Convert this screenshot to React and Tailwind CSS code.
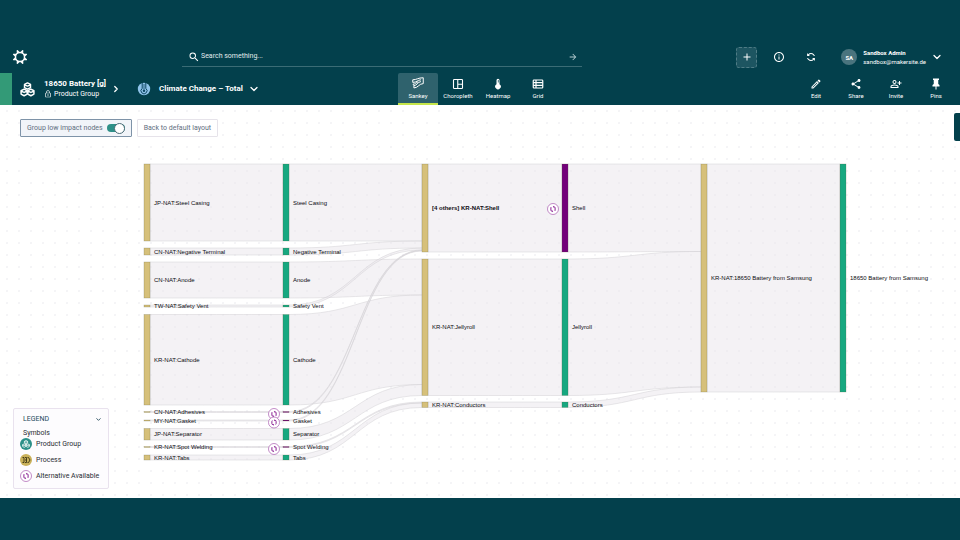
import { useState } from "react";
import {
  MdSearch,
  MdArrowForward,
  MdAdd,
  MdInfoOutline,
  MdLoop,
  MdOutlineEdit,
  MdShare,
  MdOutlinePersonAddAlt,
  MdLockOutline,
} from "react-icons/md";
import { ChevronDown, ChevronRight } from "lucide-react";

const COLUMN_X = [144, 283, 422, 562, 701, 840];
const NODE_WIDTH = 6;
const KIND_COLOR = { process: "#d6c07a", group: "#17a880", alt: "#73007a" };

const PARTS = [
  { from: "JP-NAT", name: "Steel Casing", y: [0, 77], to: [0, 77] },
  { from: "CN-NAT", name: "Negative Terminal", y: [84, 91], to: [77, 84] },
  { from: "CN-NAT", name: "Anode", y: [98, 134], to: [95, 131] },
  { from: "TW-NAT", name: "Safety Vent", y: [141, 143], to: [84, 86] },
  { from: "KR-NAT", name: "Cathode", y: [150.5, 241], to: [131, 220.5] },
  { from: "CN-NAT", name: "Adhesives", y: [247.5, 248.5], to: [86, 86.5], alt: true },
  { from: "MY-NAT", name: "Gasket", y: [256, 257], to: [86.5, 87], alt: true },
  { from: "JP-NAT", name: "Separator", y: [264.5, 276], to: [220.5, 231.5] },
  { from: "KR-NAT", name: "Spot Welding", y: [282.5, 283.5], to: [238, 239], alt: true },
  { from: "KR-NAT", name: "Tabs", y: [291, 296], to: [239, 243.5] },
];

const ASSEMBLIES = [
  { label: "[4 others] KR-NAT:Shell", name: "Shell", y: [0, 88], to: [0, 87.5], alt: true, bold: true },
  { label: "KR-NAT:Jellyroll", name: "Jellyroll", y: [95, 231.5], to: [87.5, 223] },
  { label: "KR-NAT:Conductors", name: "Conductors", y: [238, 243.5], to: [223, 228] },
];

const PRODUCT = [0, 228];

function Link({ column, from, to }) {
  const x0 = COLUMN_X[column] + NODE_WIDTH;
  const x1 = COLUMN_X[column + 1];
  const mid = (x0 + x1) / 2;
  const top = `M${x0} ${from[0]}C${mid} ${from[0]} ${mid} ${to[0]} ${x1} ${to[0]}`;
  const bottom = `C${mid} ${to[1]} ${mid} ${from[1]} ${x0} ${from[1]}`;
  return (
    <path
      d={`${top}V${to[1]}${bottom}Z`}
      fill="#eae6ec"
      fillOpacity="0.5"
      stroke="#d2d0d4"
      strokeWidth="0.5"
    />
  );
}

function Node({ column, y, kind, label, bold }) {
  const x = COLUMN_X[column];
  return (
    <g>
      <rect
        x={x}
        y={y[0]}
        width={NODE_WIDTH}
        height={y[1] - y[0]}
        fill={KIND_COLOR[kind]}
        stroke="#5b5b3c"
        strokeOpacity="0.45"
        strokeWidth="0.5"
      />
      <text
        x={x + 10}
        y={(y[0] + y[1]) / 2 + 2}
        fill="#0c0c12"
        className={bold ? "text-[6px] font-bold" : "text-[6px]"}
      >
        {label}
      </text>
    </g>
  );
}

function AltGlyph() {
  return (
    <g>
      <circle r="5.5" fill="#fff" stroke="#a95bb0" strokeWidth="0.7" />
      <g fill="none" stroke="#8a1f93" strokeWidth="1">
        <path d="M-0.6 2.2H-1A1.1 1.1 0 0 1 -2.1 1.1V-1.1A1.1 1.1 0 0 1 -1.6 -2" />
        <path d="M0.6 -2.2H1A1.1 1.1 0 0 1 2.1 -1.1V1.1A1.1 1.1 0 0 1 1.6 2" />
      </g>
      <path d="M-0.9 1.3L0.2 2.3L-0.9 3.3ZM0.9 -1.3L-0.2 -2.3L0.9 -3.3Z" fill="#8a1f93" />
    </g>
  );
}

function Sankey() {
  return (
    <svg
      viewBox="0 0 960 361"
      className="block w-full font-['Liberation_Sans',Arial,sans-serif]"
      role="img"
      aria-label="Climate change impact flow"
    >
      <g transform="translate(0 27)">
        {PARTS.map((p) => (
          <g key={p.name}>
            <Link column={0} from={p.y} to={p.y} />
            <Link column={1} from={p.y} to={p.to} />
          </g>
        ))}
        {ASSEMBLIES.map((a) => (
          <g key={a.name}>
            <Link column={2} from={a.y} to={a.y} />
            <Link column={3} from={a.y} to={a.to} />
          </g>
        ))}
        <Link column={4} from={PRODUCT} to={PRODUCT} />

        {PARTS.map((p) => (
          <g key={p.name}>
            <Node column={0} y={p.y} kind="process" label={`${p.from}:${p.name}`} />
            <Node column={1} y={p.y} kind={p.alt ? "alt" : "group"} label={p.name} />
            {p.alt && (
              <g transform={`translate(274 ${(p.y[0] + p.y[1]) / 2 + 2})`}>
                <AltGlyph />
              </g>
            )}
          </g>
        ))}
        {ASSEMBLIES.map((a) => (
          <g key={a.name}>
            <Node column={2} y={a.y} kind="process" label={a.label} bold={a.bold} />
            <Node column={3} y={a.y} kind={a.alt ? "alt" : "group"} label={a.name} />
            {a.alt && (
              <g transform={`translate(553 ${(a.y[0] + a.y[1]) / 2 + 1})`}>
                <AltGlyph />
              </g>
            )}
          </g>
        ))}
        <Node column={4} y={PRODUCT} kind="process" label="KR-NAT:18650 Battery from Samsung" />
        <Node column={5} y={PRODUCT} kind="group" label="18650 Battery from Samsung" />
      </g>
    </svg>
  );
}

function Logo() {
  const spikes = [22.5, 67.5, 112.5, 157.5, 202.5, 247.5, 292.5, 337.5];
  return (
    <svg viewBox="-8 -8 16 16" className="size-4" aria-hidden="true">
      <circle r="4.5" fill="none" stroke="currentColor" strokeWidth="1.4" />
      {spikes.map((r) => (
        <path key={r} d="M-1.6 -4.6L-0.5 -7.5H0.5L1.6 -4.6Z" fill="currentColor" transform={`rotate(${r})`} />
      ))}
    </svg>
  );
}

function GroupIcon({ className }) {
  return (
    <svg viewBox="0 0 24 24" className={className} fill="none" stroke="currentColor" strokeWidth="2.3" strokeLinejoin="round" aria-hidden="true">
      <path d="M12 1.5l4.8 2.4v5.2L12 11.500l-4.800-2.400V3.900zM7.200 4.500L12 6.500l4.800-2" />
      <path d="M6.600 11.500l4.900 2.500v5.300l-4.900 2.700-4.900-2.700V14zM1.700 14.500l4.900 2.200 4.900-2.200" />
      <path d="M17.400 11.500l4.900 2.500v5.300l-4.900 2.700-4.900-2.700V14zM12.500 14.500l4.900 2.200 4.900-2.200" />
    </svg>
  );
}

function ClimateIcon() {
  return (
    <svg viewBox="0 0 14 14" className="size-[14px]" fill="none" aria-hidden="true">
      <circle cx="7" cy="7" r="6.200" fill="#8fc3ea" />
      <path d="M5.200 0.800v5.600a3 3 0 1 0 3.600 0V0.800" stroke="#0b4560" strokeWidth="1" />
      <path d="M7 2v5.500" stroke="#0b4560" strokeWidth="0.800" />
      <circle cx="7" cy="8.800" r="1.200" fill="#0b4560" />
    </svg>
  );
}

function SankeyIcon() {
  return (
    <svg viewBox="0 0 24 24" className="size-[14px]" fill="none" stroke="currentColor" strokeWidth="1.700" strokeLinejoin="round" aria-hidden="true">
      <path d="M3 6.500c7 0 9-3.500 18-3.500v10c-7 0-9 7.500-16 7.500v-4c5 0 6-6 12-7" />
      <path d="M3 6.500V11c7 0 8-4 14-4.500M5 16.500L3.500 14c4 0 5-3 9-4" />
    </svg>
  );
}

function ChoroplethIcon() {
  return (
    <svg viewBox="0 0 24 24" className="size-3" fill="none" stroke="currentColor" strokeWidth="2.200" aria-hidden="true">
      <rect x="3" y="3" width="18" height="18" rx="1.500" />
      <path d="M11.500 3v18M11.500 12.500H21" />
    </svg>
  );
}

function HeatmapIcon() {
  return (
    <svg viewBox="0 0 24 24" className="size-3" fill="currentColor" aria-hidden="true">
      <path d="M15 12.500V4.500a3 3 0 0 0-6 0v8a5.500 5.500 0 1 0 6 0z" />
      <path d="M12.700 4v5" stroke="#03404c" strokeWidth="1.400" />
    </svg>
  );
}

function GridIcon() {
  return (
    <svg viewBox="0 0 24 24" className="size-3" fill="none" stroke="currentColor" strokeWidth="2.400" aria-hidden="true">
      <rect x="2.500" y="4" width="19" height="16" rx="1.500" />
      <path d="M2.500 9.300h19M2.500 14.700h19M8 4v16" />
    </svg>
  );
}

function PinIcon() {
  return (
    <svg viewBox="0 0 24 24" className="size-3" fill="currentColor" aria-hidden="true">
      <path d="M16.500 12V4H18V1H6v3h1.500v8L5 14v3h6v6h2v-6h6v-3z" />
    </svg>
  );
}

function ProcessIcon() {
  return (
    <svg viewBox="0 0 12 12" className="size-3" aria-hidden="true">
      <circle cx="6" cy="6" r="6" fill="#c9b15a" />
      <path d="M2.500 3.500h1.500v5H2.500M5 3.500h1.500v5H5M5 6h1.500M7.500 3.500h1L10 6 8.500 8.500h-1" fill="none" stroke="#3a3412" strokeWidth="0.900" />
    </svg>
  );
}

const TABS = [
  { label: "Sankey", icon: <SankeyIcon /> },
  { label: "Choropleth", icon: <ChoroplethIcon /> },
  { label: "Heatmap", icon: <HeatmapIcon /> },
  { label: "Grid", icon: <GridIcon /> },
];

const ACTIONS = [
  { label: "Edit", icon: <MdOutlineEdit className="size-3 stroke-current" /> },
  { label: "Share", icon: <MdShare className="size-3" /> },
  { label: "Invite", icon: <MdOutlinePersonAddAlt className="size-3 stroke-current" /> },
  { label: "Pins", icon: <PinIcon /> },
];

function TopBar() {
  return (
    <div className="flex h-[31px] items-center pr-[17px] pb-px">
      <div className="flex w-[182px] shrink-0 items-center pl-3">
        <Logo />
      </div>
      <form className="flex h-5 max-w-[400px] flex-1 items-center border-b border-[#3b6c75] pr-1 pl-[6px]" onSubmit={(e) => e.preventDefault()}>
        <label htmlFor="search" className="flex" aria-label="Search">
          <MdSearch className="size-3" />
        </label>
        <input
          id="search"
          type="text"
          placeholder="Search something..."
          className="ml-px min-w-0 flex-1 bg-transparent text-[7px] text-white outline-none placeholder:text-[#e2ebec]"
        />
        <button type="submit" aria-label="Go">
          <MdArrowForward className="size-[10px] text-[#b4cbd0]" />
        </button>
      </form>
      <div className="ml-auto flex items-center">
        <button className="flex size-[21px] items-center justify-center rounded-[3px] border border-dashed border-[#4f7c85] bg-[#1d5561]" aria-label="Add">
          <MdAdd className="size-3" />
        </button>
        <button className="ml-4" aria-label="Information">
          <MdInfoOutline className="size-3" />
        </button>
        <button className="ml-5" aria-label="Refresh">
          <MdLoop className="size-3 -rotate-45" />
        </button>
        <span className="ml-6 flex size-4 items-center justify-center rounded-full bg-[#4a747e] text-[6px] font-bold">SA</span>
        <div className="ml-[6px] text-[6px] leading-[9px]">
          <p className="font-bold">Sandbox Admin</p>
          <p>sandbox@makersite.de</p>
        </div>
        <button className="ml-[5px]" aria-label="Account menu">
          <ChevronDown className="size-3" strokeWidth={2.5} />
        </button>
      </div>
    </div>
  );
}

function ProjectBar({ view, onView }) {
  return (
    <div className="grid h-8 grid-cols-[1fr_auto_1fr] pr-1">
      <div className="flex items-center">
        <span className="h-full w-3 bg-[#339a77]" />
        <GroupIcon className="ml-2 size-[15px]" />
        <div className="ml-[9px] pb-px leading-[11px]">
          <h1 className="text-[8px] font-bold">18650 Battery [g]</h1>
          <p className="flex items-center gap-[2px] text-[7px]">
            <MdLockOutline className="size-2" />
            Product Group
          </p>
        </div>
        <ChevronRight className="ml-[5px] size-[10px]" strokeWidth={3} />
        <button className="ml-4 flex items-center text-[8px] font-bold">
          <ClimateIcon />
          <span className="ml-2">Climate Change – Total</span>
          <ChevronDown className="ml-[5px] size-3" strokeWidth={2.5} />
        </button>
      </div>
      <nav className="flex" aria-label="Views">
        {TABS.map((t) => (
          <button
            key={t.label}
            onClick={() => onView(t.label)}
            aria-pressed={view === t.label}
            className={
              "flex w-10 flex-col items-center justify-center gap-[2px] text-[6px] leading-2 " +
              (view === t.label ? "rounded-t-[2px] border-b-2 border-[#c6e64a] bg-[#2f626d] pb-px" : "")
            }
          >
            {t.icon}
            {t.label}
          </button>
        ))}
      </nav>
      <div className="flex justify-end">
        {ACTIONS.map((a) => (
          <button key={a.label} className="flex w-10 flex-col items-center justify-center gap-[2px] text-[6px] leading-2">
            {a.icon}
            {a.label}
          </button>
        ))}
      </div>
    </div>
  );
}

function Legend() {
  return (
    <aside className="absolute bottom-[9px] left-[13px] rounded-[2px] border border-[#e9e2ee] bg-[#fdfcfe] px-[6px] pt-[5px] pb-[6px] text-[7px] text-[#2a2d33]">
      <button className="flex w-full items-center justify-between pl-[3px] leading-[11px] text-[#234a5c]">
        LEGEND
        <ChevronDown className="size-[7px]" strokeWidth={3} />
      </button>
      <h2 className="mt-[3px] pl-[3px] leading-[10px]">Symbols</h2>
      <ul className="flex flex-col gap-1 pr-[3px] leading-3">
        <li className="flex items-center gap-1">
          <span className="flex size-3 items-center justify-center rounded-full bg-[#2c9088] text-white">
            <GroupIcon className="size-2" />
          </span>
          Product Group
        </li>
        <li className="flex items-center gap-1">
          <ProcessIcon />
          Process
        </li>
        <li className="flex items-center gap-1">
          <svg viewBox="-6 -6 12 12" className="size-3" aria-hidden="true">
            <AltGlyph />
          </svg>
          Alternative Available
        </li>
      </ul>
    </aside>
  );
}

export default function App() {
  const [view, setView] = useState("Sankey");
  const [grouped, setGrouped] = useState(true);

  return (
    <div className="flex min-h-screen flex-col bg-[#03404c] py-[42px] font-[Roboto,sans-serif] text-white">
      <header>
        <TopBar />
        <ProjectBar view={view} onView={setView} />
      </header>
      <main className="relative flex-1 bg-white bg-[radial-gradient(circle_at_7px_6px,#f1f1f4_0.6px,transparent_1px)] bg-[size:12px_12px]">
        <div className="flex gap-[5px] pt-[14px] pl-5 text-[7px] text-[#5f6f80]">
          <label className="flex h-[18px] items-center gap-1 rounded-[1px] border border-[#7e93a8] bg-[#f1f4f9] px-[6px]">
            Group low impact nodes
            <input
              type="checkbox"
              role="switch"
              checked={grouped}
              onChange={(e) => setGrouped(e.target.checked)}
              className="peer sr-only"
            />
            <span className="flex h-2 w-[18px] items-center rounded-full bg-[#a9b4bd] peer-checked:justify-end peer-checked:bg-[#2e9088]">
              <span className="size-[11px] rounded-full border border-[#4b6b76] bg-white" />
            </span>
          </label>
          <button className="h-[18px] rounded-[1px] border border-[#e6e3ea] bg-white px-[6px]">Back to default layout</button>
        </div>
        <Sankey />
        <Legend />
        <button className="absolute top-2 right-0 h-7 w-[6px] rounded-l-[2px] bg-[#03404c]" aria-label="Open side panel" />
      </main>
    </div>
  );
}
